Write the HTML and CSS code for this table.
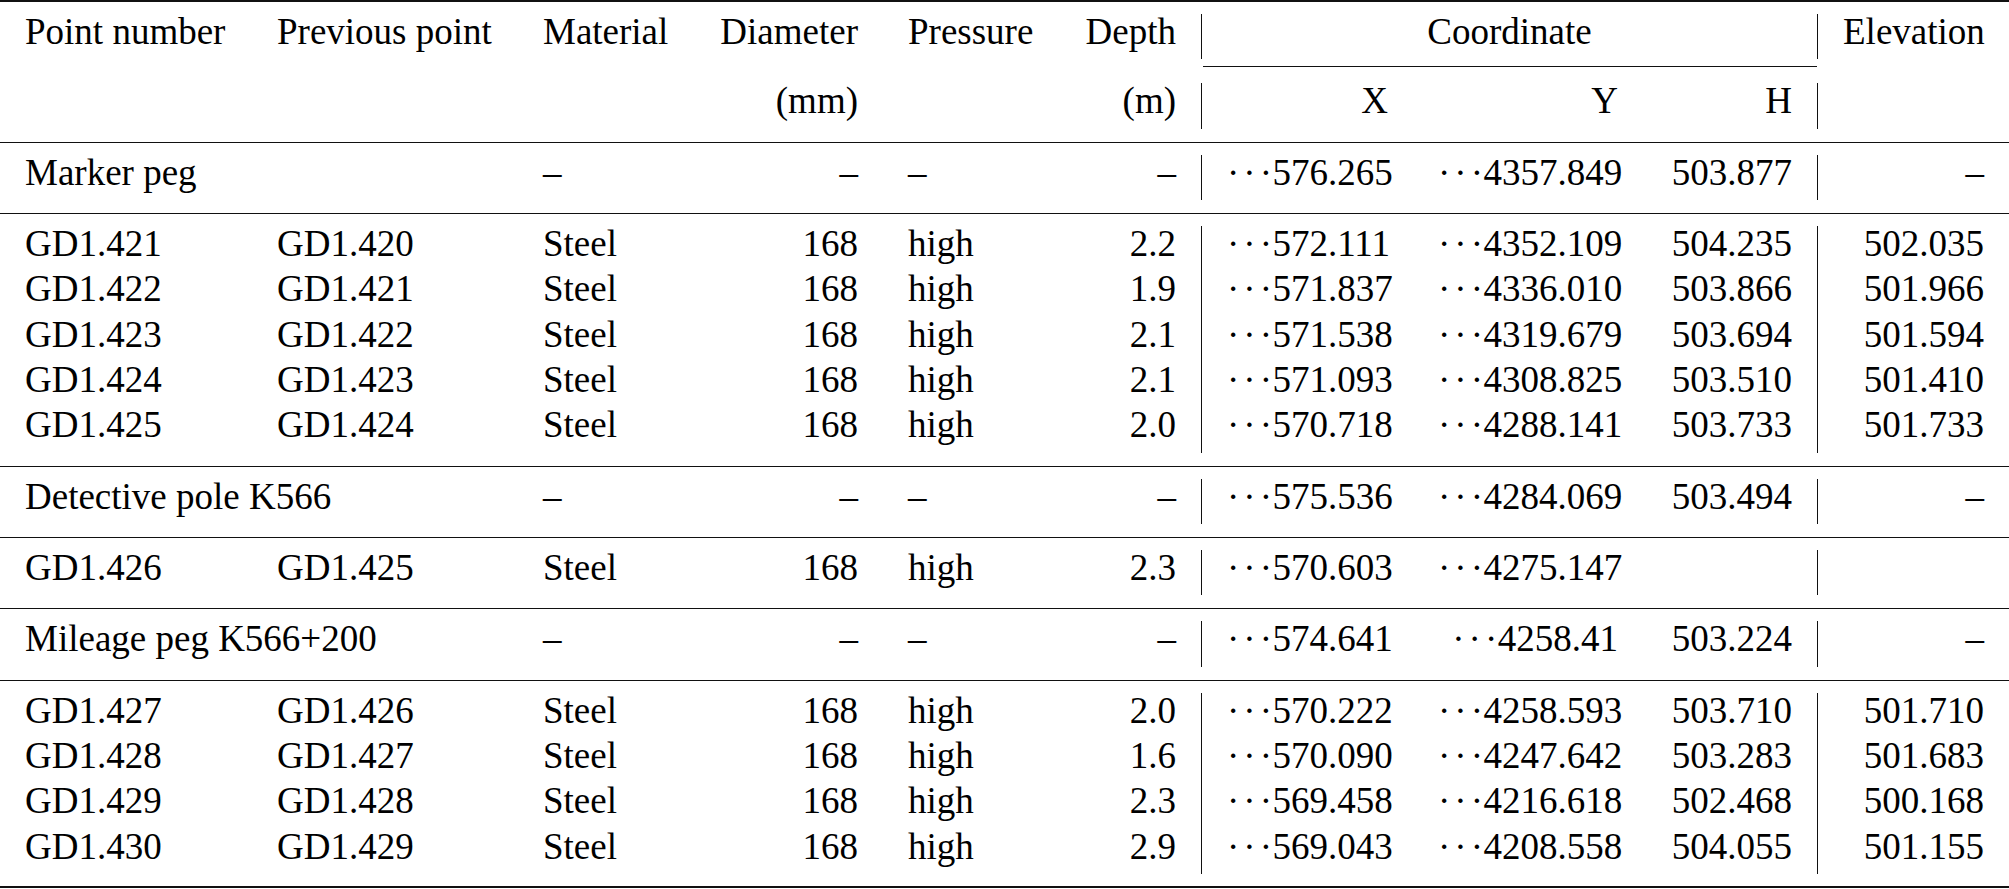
FILE: index.html
```html
<!DOCTYPE html>
<html lang="en">
<head>
<meta charset="utf-8">
<title>Pipeline survey points</title>
<link rel="stylesheet" href="styles.css">
</head>
<body>
<table class="survey">
  <colgroup>
    <col class="w-point">
    <col class="w-prev">
    <col class="w-mat">
    <col class="w-dia">
    <col class="w-pres">
    <col class="w-depth">
    <col class="w-x">
    <col class="w-y">
    <col class="w-h">
    <col class="w-elev">
  </colgroup>
  <thead>
    <tr class="spacer"><td colspan="10"></td></tr>
    <tr class="row">
      <th class="l">Point number</th>
      <th class="l">Previous point</th>
      <th class="l">Material</th>
      <th class="r">Diameter</th>
      <th class="l">Pressure</th>
      <th class="r">Depth</th>
      <th class="c bar" colspan="3">Coordinate</th>
      <th class="r bar">Elevation</th>
    </tr>
    <tr class="cmid">
      <td colspan="6"></td>
      <td colspan="3"><div class="cmidrule"></div></td>
      <td></td>
    </tr>
    <tr class="row">
      <th></th>
      <th></th>
      <th></th>
      <th class="r">(mm)</th>
      <th></th>
      <th class="r">(m)</th>
      <th class="r bar">X</th>
      <th class="r">Y</th>
      <th class="r">H</th>
      <th class="r bar"></th>
    </tr>
    <tr class="sep"><td colspan="10"><div class="midrule"></div></td></tr>
  </thead>
  <tbody>
    <tr class="row">
      <td class="l" colspan="2">Marker peg</td>
      <td class="l">–</td>
      <td class="r">–</td>
      <td class="l">–</td>
      <td class="r">–</td>
      <td class="r bar"><span class="dots">···</span>576.265</td>
      <td class="r"><span class="dots">···</span>4357.849</td>
      <td class="r">503.877</td>
      <td class="r bar">–</td>
    </tr>
    <tr class="sep"><td colspan="10"><div class="midrule"></div></td></tr>
    <tr class="row">
      <td class="l">GD1.421</td><td class="l">GD1.420</td><td class="l">Steel</td><td class="r">168</td><td class="l">high</td><td class="r">2.2</td>
      <td class="r bar"><span class="dots">···</span>572.111</td><td class="r"><span class="dots">···</span>4352.109</td><td class="r">504.235</td><td class="r bar">502.035</td>
    </tr>
    <tr class="row">
      <td class="l">GD1.422</td><td class="l">GD1.421</td><td class="l">Steel</td><td class="r">168</td><td class="l">high</td><td class="r">1.9</td>
      <td class="r bar"><span class="dots">···</span>571.837</td><td class="r"><span class="dots">···</span>4336.010</td><td class="r">503.866</td><td class="r bar">501.966</td>
    </tr>
    <tr class="row">
      <td class="l">GD1.423</td><td class="l">GD1.422</td><td class="l">Steel</td><td class="r">168</td><td class="l">high</td><td class="r">2.1</td>
      <td class="r bar"><span class="dots">···</span>571.538</td><td class="r"><span class="dots">···</span>4319.679</td><td class="r">503.694</td><td class="r bar">501.594</td>
    </tr>
    <tr class="row">
      <td class="l">GD1.424</td><td class="l">GD1.423</td><td class="l">Steel</td><td class="r">168</td><td class="l">high</td><td class="r">2.1</td>
      <td class="r bar"><span class="dots">···</span>571.093</td><td class="r"><span class="dots">···</span>4308.825</td><td class="r">503.510</td><td class="r bar">501.410</td>
    </tr>
    <tr class="row">
      <td class="l">GD1.425</td><td class="l">GD1.424</td><td class="l">Steel</td><td class="r">168</td><td class="l">high</td><td class="r">2.0</td>
      <td class="r bar"><span class="dots">···</span>570.718</td><td class="r"><span class="dots">···</span>4288.141</td><td class="r">503.733</td><td class="r bar">501.733</td>
    </tr>
    <tr class="sep"><td colspan="10"><div class="midrule"></div></td></tr>
    <tr class="row">
      <td class="l" colspan="2">Detective pole K566</td>
      <td class="l">–</td>
      <td class="r">–</td>
      <td class="l">–</td>
      <td class="r">–</td>
      <td class="r bar"><span class="dots">···</span>575.536</td>
      <td class="r"><span class="dots">···</span>4284.069</td>
      <td class="r">503.494</td>
      <td class="r bar">–</td>
    </tr>
    <tr class="sep"><td colspan="10"><div class="midrule"></div></td></tr>
    <tr class="row">
      <td class="l">GD1.426</td><td class="l">GD1.425</td><td class="l">Steel</td><td class="r">168</td><td class="l">high</td><td class="r">2.3</td>
      <td class="r bar"><span class="dots">···</span>570.603</td><td class="r"><span class="dots">···</span>4275.147</td><td class="r"></td><td class="r bar"></td>
    </tr>
    <tr class="sep"><td colspan="10"><div class="midrule"></div></td></tr>
    <tr class="row">
      <td class="l" colspan="2">Mileage peg K566+200</td>
      <td class="l">–</td>
      <td class="r">–</td>
      <td class="l">–</td>
      <td class="r">–</td>
      <td class="r bar"><span class="dots">···</span>574.641</td>
      <td class="r"><span class="dots">···</span>4258.41</td>
      <td class="r">503.224</td>
      <td class="r bar">–</td>
    </tr>
    <tr class="sep"><td colspan="10"><div class="midrule"></div></td></tr>
    <tr class="row">
      <td class="l">GD1.427</td><td class="l">GD1.426</td><td class="l">Steel</td><td class="r">168</td><td class="l">high</td><td class="r">2.0</td>
      <td class="r bar"><span class="dots">···</span>570.222</td><td class="r"><span class="dots">···</span>4258.593</td><td class="r">503.710</td><td class="r bar">501.710</td>
    </tr>
    <tr class="row">
      <td class="l">GD1.428</td><td class="l">GD1.427</td><td class="l">Steel</td><td class="r">168</td><td class="l">high</td><td class="r">1.6</td>
      <td class="r bar"><span class="dots">···</span>570.090</td><td class="r"><span class="dots">···</span>4247.642</td><td class="r">503.283</td><td class="r bar">501.683</td>
    </tr>
    <tr class="row">
      <td class="l">GD1.429</td><td class="l">GD1.428</td><td class="l">Steel</td><td class="r">168</td><td class="l">high</td><td class="r">2.3</td>
      <td class="r bar"><span class="dots">···</span>569.458</td><td class="r"><span class="dots">···</span>4216.618</td><td class="r">502.468</td><td class="r bar">500.168</td>
    </tr>
    <tr class="row">
      <td class="l">GD1.430</td><td class="l">GD1.429</td><td class="l">Steel</td><td class="r">168</td><td class="l">high</td><td class="r">2.9</td>
      <td class="r bar"><span class="dots">···</span>569.043</td><td class="r"><span class="dots">···</span>4208.558</td><td class="r">504.055</td><td class="r bar">501.155</td>
    </tr>
    <tr class="spacer"><td colspan="10"></td></tr>
  </tbody>
</table>
</body>
</html>
```

FILE: styles.css
```css
html, body {
  margin: 0;
  padding: 0;
  background: #ffffff;
}

.survey {
  width: 2009px;
  table-layout: fixed;
  border-collapse: separate;
  border-spacing: 0;
  border-top: 2px solid #111;
  border-bottom: 2px solid #111;
  font-family: "Liberation Serif", "Times New Roman", serif;
  font-size: 37px;
  color: #000;
}

.w-point { width: 252px; }
.w-prev  { width: 266px; }
.w-mat   { width: 176px; }
.w-dia   { width: 189px; }
.w-pres  { width: 176px; }
.w-depth { width: 142px; }
.w-x     { width: 212px; }
.w-y     { width: 230px; }
.w-h     { width: 174px; }
.w-elev  { width: 192px; }

.survey th,
.survey td {
  box-sizing: border-box;
  font-weight: normal;
  white-space: nowrap;
}

.row th,
.row td {
  padding: 0 25px 8.93px;
  line-height: 36.4px;
  vertical-align: top;
}

.l { text-align: left; }
.r { text-align: right; }
.c { text-align: center; }

.bar {
  border-left: 1px solid #111;
}

.spacer td {
  height: 12px;
  padding: 0;
}

.sep td {
  height: 26px;
  padding: 0;
  vertical-align: top;
}

.cmid td {
  height: 24px;
  padding: 0;
  vertical-align: top;
}

.midrule {
  margin-top: 13px;
  border-top: 1px solid #111;
}

.cmidrule {
  margin: 7px 0 0 2px;
  border-top: 1px solid #111;
}

.dots {
  letter-spacing: 4px;
  margin-right: -3.5px;
}
```
